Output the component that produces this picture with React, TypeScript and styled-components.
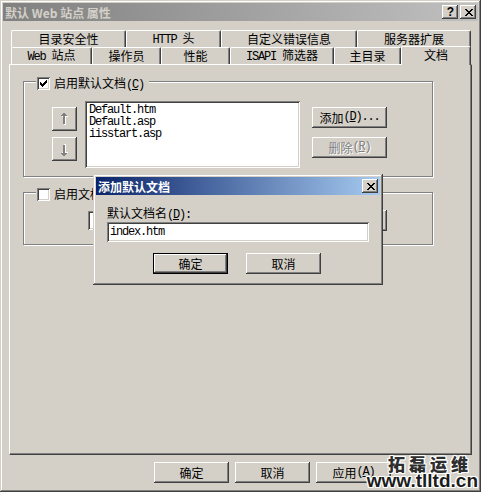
import React from 'react';
import styled, { createGlobalStyle, css } from 'styled-components';

const GlobalStyle = createGlobalStyle`
  html, body { margin: 0; padding: 0; }
  body {
    background: #d4d0c8;
    font-family: "Noto Sans CJK SC", "Liberation Sans", sans-serif;
    font-size: 12px;
    line-height: 13px;
    color: #000;
  }
  * { box-sizing: border-box; }
`;

const raised = css`
  box-shadow: inset -1px -1px 0 #404040, inset 1px 1px 0 #ffffff,
    inset -2px -2px 0 #808080, inset 2px 2px 0 #d4d0c8;
`;
const sunken = css`
  box-shadow: inset 1px 1px 0 #808080, inset -1px -1px 0 #ffffff,
    inset 2px 2px 0 #404040, inset -2px -2px 0 #d4d0c8;
`;

const Mono = styled.span`
  font-family: "Liberation Mono", "Courier New", monospace;
  letter-spacing: -1.2px;
`;

const Window = styled.div`
  position: relative;
  width: 481px;
  height: 492px;
  padding: 3px;
  background: #d4d0c8;
  box-shadow: inset -1px -1px 0 #404040, inset 1px 1px 0 #d4d0c8,
    inset -2px -2px 0 #808080, inset 2px 2px 0 #ffffff;
  display: flex;
  flex-direction: column;
  overflow: hidden;
`;

const TitleBar = styled.div<{ $active?: boolean }>`
  height: 18px;
  flex: none;
  display: flex;
  align-items: center;
  padding: 0 2px;
  background: ${p =>
    p.$active
      ? 'linear-gradient(to right, #0a246a, #a6caf0)'
      : 'linear-gradient(to right, #808080, #c0c0c0)'};
  color: ${p => (p.$active ? '#ffffff' : '#d4d0c8')};
  font-weight: bold;
`;

const TitleText = styled.span`
  flex: 1;
  white-space: nowrap;
`;

const TitleButtons = styled.div`
  display: flex;
  gap: 2px;
`;

const TitleButton = styled.div`
  width: 16px;
  height: 14px;
  background: #d4d0c8;
  ${raised};
  display: flex;
  align-items: center;
  justify-content: center;
  color: #000;
  font-family: "Liberation Sans", sans-serif;
  font-weight: bold;
  font-size: 12px;
  line-height: 14px;
  padding-left: 1px;
`;

const Body = styled.div`
  display: flex;
  flex-direction: column;
  padding: 9px 0 0 6px;
`;

const TabRow = styled.div<{ $front?: boolean }>`
  display: flex;
  align-items: flex-end;
  height: 17px;
  padding-left: 2px;
  position: relative;
  z-index: ${p => (p.$front ? 2 : 0)};
`;

const Tab = styled.div<{ $w: number; $active?: boolean }>`
  flex: none;
  width: ${p => p.$w}px;
  height: ${p => (p.$active ? 19 : 17)}px;
  margin-bottom: ${p => (p.$active ? -1 : 0)}px;
  background: #d4d0c8;
  border-top: 1px solid #ffffff;
  border-left: 1px solid #ffffff;
  border-right: 1px solid #404040;
  border-radius: 2px 2px 0 0;
  box-shadow: inset -1px 0 0 #808080;
  display: flex;
  align-items: center;
  justify-content: center;
  padding-bottom: ${p => (p.$active ? 3 : 1)}px;
`;

const TabLabel = styled.span`
  white-space: pre;
`;

const Panel = styled.div`
  position: relative;
  z-index: 1;
  width: 463px;
  height: 391px;
  background: #d4d0c8;
  border-top: 1px solid #ffffff;
  border-left: 1px solid #ffffff;
  border-right: 1px solid #404040;
  border-bottom: 1px solid #404040;
  box-shadow: inset -1px -1px 0 #808080;
  padding: 16px 0 0 13px;
  display: flex;
  flex-direction: column;
`;

const Group = styled.div<{ $h: number }>`
  width: 410px;
  height: ${p => p.$h}px;
  flex: none;
  border: 1px solid #808080;
  box-shadow: inset 1px 1px 0 #ffffff, 1px 1px 0 #ffffff;
  display: flex;
  flex-direction: column;
  align-items: flex-start;
  & + & {
    margin-top: 15px;
  }
`;

const Legend = styled.div`
  display: flex;
  align-items: center;
  gap: 4px;
  height: 13px;
  margin: -5px 0 0 12px;
  padding: 0 5px 0 1px;
  background: #d4d0c8;
  white-space: nowrap;
`;

const CheckBox = styled.span`
  flex: none;
  width: 13px;
  height: 13px;
  background: #ffffff;
  ${sunken};
  display: flex;
  align-items: center;
  justify-content: center;
`;

const GroupRow = styled.div<{ $mt: number; $ml: number }>`
  display: flex;
  align-items: flex-start;
  margin: ${p => p.$mt}px 0 0 ${p => p.$ml}px;
`;

const ArrowCol = styled.div`
  display: flex;
  flex-direction: column;
  gap: 6px;
  margin-top: 6px;
`;

const ArrowButton = styled.div`
  width: 25px;
  height: 24px;
  background: #d4d0c8;
  ${raised};
  display: flex;
  align-items: center;
  justify-content: center;
`;

const ListBox = styled.div`
  width: 215px;
  height: 67px;
  margin-left: 8px;
  background: #ffffff;
  ${sunken};
  padding: 3px 4px;
  display: flex;
  flex-direction: column;
`;

const ListItem = styled.div`
  font-family: "Liberation Mono", "Courier New", monospace;
  letter-spacing: -1.2px;
  height: 12px;
  line-height: 12px;
  white-space: nowrap;
`;

const ButtonCol = styled.div`
  display: flex;
  flex-direction: column;
  gap: 9px;
  margin: 6px 0 0 12px;
`;

const Button = styled.div<{ $disabled?: boolean; $default?: boolean; $ml?: number }>`
  flex: none;
  width: 75px;
  height: 21px;
  margin-left: ${p => p.$ml ?? 0}px;
  background: #d4d0c8;
  ${p =>
    p.$default
      ? css`
          box-shadow: inset 0 0 0 1px #000000, inset -2px -2px 0 #404040,
            inset 2px 2px 0 #ffffff, inset -3px -3px 0 #808080,
            inset 3px 3px 0 #d4d0c8;
        `
      : raised};
  display: flex;
  align-items: center;
  justify-content: center;
  white-space: nowrap;
  color: ${p => (p.$disabled ? '#808080' : '#000000')};
  text-shadow: ${p => (p.$disabled ? '1px 1px 0 #ffffff' : 'none')};
`;

const TextField = styled.div<{ $w: number; $h: number; $mt?: number }>`
  flex: none;
  width: ${p => p.$w}px;
  height: ${p => p.$h}px;
  margin-top: ${p => p.$mt ?? 0}px;
  background: #ffffff;
  ${sunken};
  padding: 0 3px;
  display: flex;
  align-items: center;
  font-family: "Liberation Mono", "Courier New", monospace;
  letter-spacing: -1.2px;
  white-space: nowrap;
`;

const Footer = styled.div`
  display: flex;
  gap: 6px;
  margin-top: 7px;
  padding-left: 145px;
`;

const Dialog = styled.div`
  position: absolute;
  left: 93px;
  top: 174px;
  width: 290px;
  height: 111px;
  z-index: 5;
  padding: 3px;
  background: #d4d0c8;
  box-shadow: inset -1px -1px 0 #404040, inset 1px 1px 0 #d4d0c8,
    inset -2px -2px 0 #808080, inset 2px 2px 0 #ffffff;
  display: flex;
  flex-direction: column;
`;

const DialogBody = styled.div`
  display: flex;
  flex-direction: column;
  align-items: flex-start;
  padding: 11px 11px 0 11px;
`;

const FieldLabel = styled.div`
  height: 13px;
  white-space: nowrap;
`;

const DialogButtons = styled.div`
  display: flex;
  gap: 18px;
  margin: 11px 0 0 57px;
`;

const Watermark = styled.div`
  position: absolute;
  left: 362px;
  top: 455px;
  width: 118px;
  z-index: 6;
  display: flex;
  flex-direction: column;
  align-items: flex-end;
  pointer-events: none;
`;

const outline = css`
  text-shadow: -1px -1px 0 #ffffff, 1px -1px 0 #ffffff, -1px 1px 0 #ffffff,
    1px 1px 0 #ffffff, 0 1px 0 #ffffff, 0 -1px 0 #ffffff, 1px 0 0 #ffffff,
    -1px 0 0 #ffffff;
`;

const WatermarkCn = styled.div`
  font-family: "Noto Sans CJK SC", sans-serif;
  font-weight: 900;
  font-size: 17px;
  line-height: 18px;
  letter-spacing: 4px;
  color: #2e2e2e;
  margin-right: 8px;
  ${outline};
`;

const WatermarkUrl = styled.div`
  font-family: "Liberation Sans", Arial, sans-serif;
  font-weight: bold;
  font-size: 19px;
  line-height: 15px;
  color: #1c1c1c;
  margin-right: 2px;
  ${outline};
`;

const Key = ({ k }: { k: string }) => (
  <Mono>
    (<u>{k}</u>)
  </Mono>
);

const CheckMark = () => (
  <svg width="7" height="7" viewBox="0 0 7 7" shapeRendering="crispEdges">
    <path
      d="M6 0h1v3h-1v1h-1v1h-1v1h-1v1h-1v-1h-1v-1h-1v-3h1v1h1v1h1v-1h1v-1h1z"
      fill="#000"
    />
  </svg>
);

const ArrowGlyph = ({ down }: { down?: boolean }) => {
  const d = 'M2 0h2v1h1v1h1v1h-2v8h-2v-8h-2v-1h1v-1h1z';
  return (
    <svg
      width="8"
      height="13"
      viewBox="0 0 8 13"
      shapeRendering="crispEdges"
      style={down ? { transform: 'scaleY(-1)' } : undefined}
    >
      <path d={d} transform="translate(1,1)" fill="#ffffff" />
      <path d={d} fill="#808080" />
    </svg>
  );
};

const CloseGlyph = () => (
  <svg width="8" height="7" viewBox="0 0 8 7" shapeRendering="crispEdges">
    <path
      d="M0 0h2v1h1v1h2v-1h1v-1h2v1h-1v1h-1v1h-1v1h1v1h1v1h1v1h-2v-1h-1v-1h-2v1h-1v1h-2v-1h1v-1h1v-1h1v-1h-1v-1h-1v-1h-1z"
      fill="#000"
    />
  </svg>
);

const backTabs: { label: React.ReactNode; w: number }[] = [
  { label: '目录安全性', w: 115 },
  { label: <><Mono>HTTP </Mono>头</>, w: 95 },
  { label: '自定义错误信息', w: 136 },
  { label: '服务器扩展', w: 114 },
];

const frontTabs: { label: React.ReactNode; w: number; active?: boolean }[] = [
  { label: <><Mono>Web </Mono>站点</>, w: 81 },
  { label: '操作员', w: 69 },
  { label: '性能', w: 69 },
  { label: <><Mono>ISAPI </Mono>筛选器</>, w: 104 },
  { label: '主目录', w: 67 },
  { label: '文档', w: 70, active: true },
];

const docs = ['Default.htm', 'Default.asp', 'iisstart.asp'];

export default function App() {
  return (
    <>
      <GlobalStyle />
      <Window>
        <TitleBar>
          <TitleText>默认 Web 站点 属性</TitleText>
          <TitleButtons>
            <TitleButton>?</TitleButton>
            <TitleButton>
              <CloseGlyph />
            </TitleButton>
          </TitleButtons>
        </TitleBar>
        <Body>
          <TabRow>
            {backTabs.map((t, i) => (
              <Tab key={i} $w={t.w}>
                <TabLabel>{t.label}</TabLabel>
              </Tab>
            ))}
          </TabRow>
          <TabRow $front>
            {frontTabs.map((t, i) => (
              <Tab key={i} $w={t.w} $active={t.active}>
                <TabLabel>{t.label}</TabLabel>
              </Tab>
            ))}
          </TabRow>
          <Panel>
            <Group $h={96}>
              <Legend>
                <CheckBox>
                  <CheckMark />
                </CheckBox>
                <span>
                  启用默认文档<Key k="C" />
                </span>
              </Legend>
              <GroupRow $mt={11} $ml={28}>
                <ArrowCol>
                  <ArrowButton>
                    <ArrowGlyph />
                  </ArrowButton>
                  <ArrowButton>
                    <ArrowGlyph down />
                  </ArrowButton>
                </ArrowCol>
                <ListBox>
                  {docs.map(d => (
                    <ListItem key={d}>{d}</ListItem>
                  ))}
                </ListBox>
                <ButtonCol>
                  <Button>
                    添加<Key k="D" />
                    <Mono>...</Mono>
                  </Button>
                  <Button $disabled>
                    删除<Key k="R" />
                  </Button>
                </ButtonCol>
              </GroupRow>
            </Group>
            <Group $h={53}>
              <Legend>
                <CheckBox />
                <span>
                  启用文档页脚<Key k="O" />
                </span>
              </Legend>
              <GroupRow $mt={9} $ml={64}>
                <TextField $w={215} $h={19} $mt={1} />
                <Button $ml={9}>
                  浏览<Key k="W" />
                  <Mono>...</Mono>
                </Button>
              </GroupRow>
            </Group>
          </Panel>
          <Footer>
            <Button>确定</Button>
            <Button>取消</Button>
            <Button>
              应用<Key k="A" />
            </Button>
          </Footer>
        </Body>

        <Dialog>
          <TitleBar $active>
            <TitleText>添加默认文档</TitleText>
            <TitleButton>
              <CloseGlyph />
            </TitleButton>
          </TitleBar>
          <DialogBody>
            <FieldLabel>
              默认文档名<Key k="D" />
              <Mono>:</Mono>
            </FieldLabel>
            <TextField $w={262} $h={20} $mt={3}>
              index.htm
            </TextField>
          </DialogBody>
          <DialogButtons>
            <Button $default>确定</Button>
            <Button>取消</Button>
          </DialogButtons>
        </Dialog>

        <Watermark>
          <WatermarkCn>拓磊运维</WatermarkCn>
          <WatermarkUrl>www.tlltd.cn</WatermarkUrl>
        </Watermark>
      </Window>
    </>
  );
}
